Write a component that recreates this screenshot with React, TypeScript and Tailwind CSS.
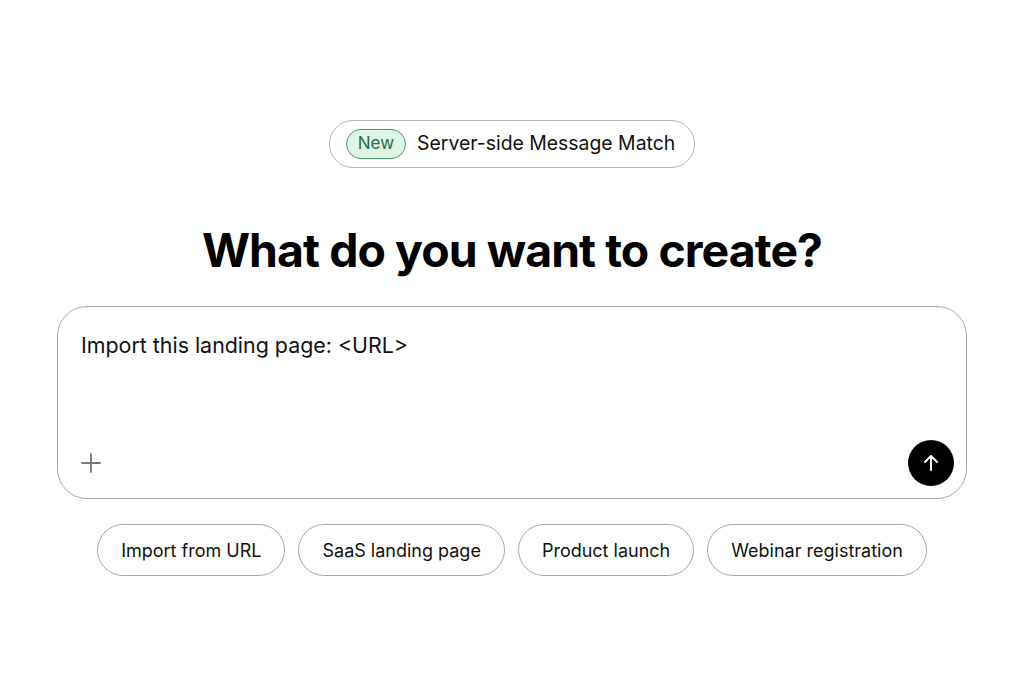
import React from 'react';

const chips = ['Import from URL', 'SaaS landing page', 'Product launch', 'Webinar registration'];

export default function App() {
  return (
    <div className="min-h-screen bg-white flex flex-col items-center pt-[120px] text-black" style={{ fontFamily: 'Inter, "Noto Sans", sans-serif' }}>
      {/* Announcement pill */}
      <div className="h-[48px] flex items-center gap-[11px] pl-[16px] pr-[19px] rounded-full border border-[#b5b5b5]">
        <span className="h-[30px] flex items-center px-[11px] rounded-full border border-[#4f9a6b] bg-[#dcf5e5] text-[#2f6b45] text-[17px]">
          New
        </span>
        <span className="text-[19.4px] text-[#111]">Server-side Message Match</span>
      </div>

      {/* Heading */}
      <h1 className="mt-[52px] text-[46.4px] leading-[60px] font-bold tracking-[-0.02em]">What do you want to create?</h1>

      {/* Prompt box */}
      <div className="mt-[26px] w-[910px] h-[193px] rounded-[30px] border border-[#a8a8a8] flex flex-col justify-between pl-[23px] pr-[12px] pt-[24px] pb-[12px]">
        <p className="text-[21.4px] text-[#111] leading-[28px]">Import this landing page: &lt;URL&gt;</p>
        <div className="flex items-center justify-between">
          <svg width="22" height="22" viewBox="0 0 22 22" className="ml-[-1px]">
            <path d="M11 2v18M2 11h18" stroke="#777" strokeWidth="1.8" strokeLinecap="round" />
          </svg>
          <button className="w-[46px] h-[46px] rounded-full bg-black flex items-center justify-center">
            <svg width="20" height="20" viewBox="0 0 20 20">
              <path d="M10 17V3.5M4 9l6-6 6 6" stroke="#fff" strokeWidth="2" fill="none" strokeLinecap="round" strokeLinejoin="round" />
            </svg>
          </button>
        </div>
      </div>

      {/* Suggestion chips */}
      <div className="mt-[25px] flex gap-[13px]">
        {chips.map((c) => (
          <button key={c} className="h-[52px] px-[23px] rounded-full border border-[#a8a8a8] text-[18px] text-[#111]">
            {c}
          </button>
        ))}
      </div>
    </div>
  );
}
